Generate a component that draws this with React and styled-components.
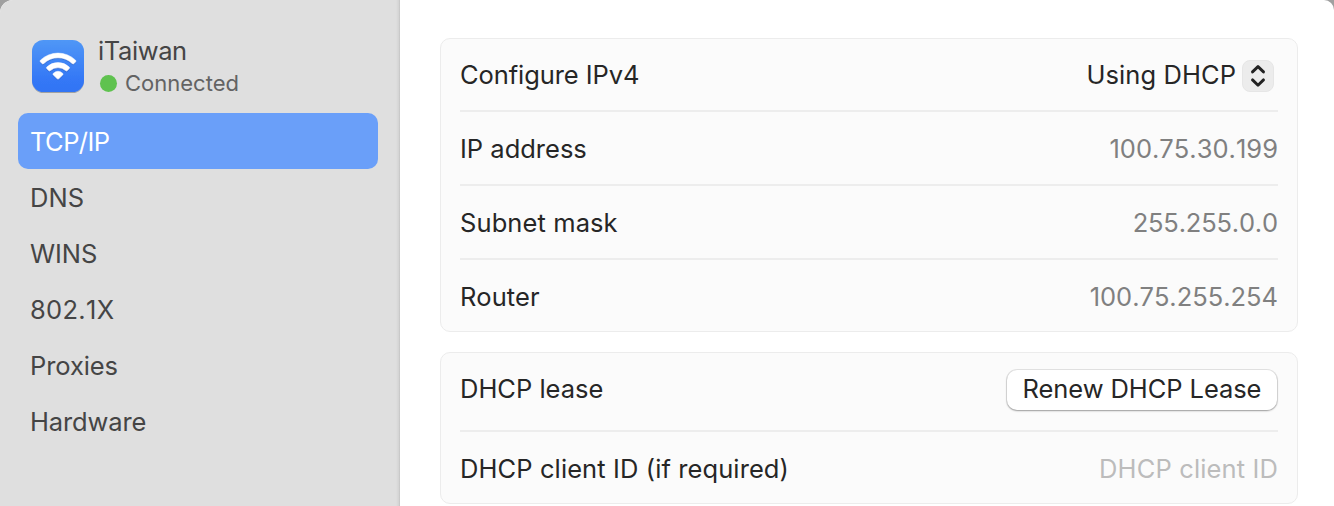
import React from "react";
import styled, { createGlobalStyle } from "styled-components";

const GlobalStyle = createGlobalStyle`
  *, *::before, *::after { box-sizing: border-box; }
  body {
    margin: 0;
    background: #a0a0a0;
    font-family: Inter, "Liberation Sans", sans-serif;
    font-size: 25.5px;
    color: #262626;
    overflow: hidden;
  }
`;

const Window = styled.div`
  display: flex;
  width: 1334px;
  height: 506px;
  overflow: hidden;
  border-radius: 13px 10px 0 0;
  background: #fff;
`;

const Sidebar = styled.aside`
  width: 400px;
  padding: 36px 22px 0 18px;
  background: linear-gradient(to right, #dfdfdf 396px, #d3d3d3 399px, #c0c0c0 400px);
`;

const Network = styled.div`
  display: flex;
  gap: 14px;
  height: 77px;
  padding: 4px 0 0 14px;
`;

const AppIcon = styled.svg`
  flex: none;
  width: 52px;
  height: 53px;
  overflow: visible;
`;

const NetworkText = styled.div`
  display: flex;
  flex-direction: column;
  margin-top: -4px;
  color: #454545;
`;

const Label = styled.span`
  line-height: 30px;
  white-space: nowrap;
  letter-spacing: ${(p) => p.$spacing || 0}px;
  margin-right: ${(p) => -(p.$spacing || 0)}px;
  font-kerning: ${(p) => (p.$unkerned ? "none" : "auto")};
`;

const Status = styled.div`
  display: flex;
  align-items: center;
  gap: 8px;
  height: 34px;
  padding-left: 2px;
  font-size: 22px;
  color: #636363;
`;

const Dot = styled.i`
  width: 17px;
  height: 17px;
  border-radius: 50%;
  background: #5fc24f;
`;

const NavItem = styled.div`
  display: flex;
  align-items: center;
  height: 56px;
  padding: 2px 12px 0;
  border-radius: 10px;
  color: ${(p) => (p.$active ? "#fff" : "#454545")};
  background: ${(p) => (p.$active ? "#6a9ff9" : "transparent")};
`;

const Content = styled.main`
  flex: 1;
  display: flex;
  flex-direction: column;
  gap: 20px;
  padding: 38px 36px 0 40px;
`;

const Card = styled.section`
  padding: 0 19px;
  border: 1px solid #ececec;
  border-radius: 10px;
  background: #fbfbfb;
`;

const Row = styled.div`
  display: flex;
  align-items: center;
  justify-content: space-between;
  height: ${(p) => p.$height}px;
  padding-top: ${(p) => p.$drop || 0}px;
  padding-bottom: ${(p) => p.$lift || 0}px;
  border-bottom: ${(p) => (p.$last ? "none" : "2px solid #ededed")};
`;

const Value = styled(Label)`
  color: ${(p) => (p.$placeholder ? "#bcbcbc" : "#808080")};
`;

const Select = styled.div`
  display: flex;
  align-items: center;
  gap: 6px;
  padding-right: 4px;
`;

const Stepper = styled.span`
  display: flex;
  width: 32px;
  height: 32px;
  margin-top: 2px;
  border: 1px solid #e6e6e6;
  border-radius: 8px;
  background: #ececec;
`;

const Button = styled.button`
  display: flex;
  align-items: center;
  justify-content: center;
  width: 270px;
  height: 40px;
  margin: 2px 1px 0 0;
  padding: 0 0 2px;
  border: 0;
  border-radius: 10px;
  background: #fff;
  color: inherit;
  font: inherit;
  box-shadow: 0 0 0 1px rgba(0, 0, 0, 0.09), 0 1px 2px rgba(0, 0, 0, 0.32);
`;

const items = [
  ["TCP/IP", -0.6],
  ["DNS", 0.1],
  ["WINS", -0.1],
  ["802.1X", 0.3],
  ["Proxies", -0.1],
  ["Hardware", -0.12],
];

const addresses = [
  ["IP address", "100.75.30.199", 0, 0.02],
  ["Subnet mask", "255.255.0.0", 0.1, -0.2],
  ["Router", "100.75.255.254", 0.15, -0.02],
];

function WifiIcon() {
  return (
    <AppIcon viewBox="0 0 52 53" aria-label="Wi-Fi">
      <defs>
        <linearGradient id="tile" x1="0" y1="0" x2="0" y2="1">
          <stop offset="0" stopColor="#5097f6" />
          <stop offset="0.75" stopColor="#3478f6" />
          <stop offset="1" stopColor="#3274f4" />
        </linearGradient>
        <filter id="tileShadow" x="-10%" y="-10%" width="120%" height="125%">
          <feDropShadow dx="0" dy="0.8" stdDeviation="0.7" floodOpacity="0.35" />
        </filter>
        <filter id="glyphShadow" x="-10%" y="-10%" width="120%" height="130%">
          <feDropShadow dx="0" dy="1" stdDeviation="0.7" floodColor="#123c90" floodOpacity="0.35" />
        </filter>
      </defs>
      <rect width="52" height="52" rx="11.5" fill="url(#tile)" filter="url(#tileShadow)" />
      <g filter="url(#glyphShadow)" fill="#fff" stroke="#fff" strokeWidth="0.5">
        <path d="M8.4 20.2A25.3 25.3 0 0 1 43.6 20.2Q44.3 21 43.6 21.8L42 23.5Q41.1 24.2 40.2 23.4A20.4 20.4 0 0 0 11.8 23.4Q10.9 24.2 10 23.5L8.4 21.8Q7.7 21 8.4 20.2Z" />
        <path d="M14.8 27A16.2 16.2 0 0 1 37.2 27Q37.9 27.8 37.2 28.6L35.3 30.5Q34.5 31.2 33.7 30.5A11.6 11.6 0 0 0 18.3 30.5Q17.5 31.2 16.7 30.5L14.8 28.6Q14.1 27.8 14.8 27Z" />
        <path d="M21.2 33.4Q26 29.1 30.8 33.4Q31.4 34.1 30.8 34.8L26.9 38.6Q26 39.4 25.1 38.6L21.2 34.8Q20.6 34.1 21.2 33.4Z" />
      </g>
    </AppIcon>
  );
}

export default function App() {
  return (
    <>
      <GlobalStyle />
      <Window>
        <Sidebar>
          <Network>
            <WifiIcon />
            <NetworkText>
              <Label $spacing={-0.4}>iTaiwan</Label>
              <Status>
                <Dot />
                <Label>Connected</Label>
              </Status>
            </NetworkText>
          </Network>
          {items.map(([name, spacing], i) => (
            <NavItem key={name} $active={i === 0}>
              <Label $spacing={spacing} $unkerned={name === "802.1X"}>{name}</Label>
            </NavItem>
          ))}
        </Sidebar>
        <Content>
          <Card>
            <Row $height={73}>
              <Label $spacing={-0.08}>Configure IPv4</Label>
              <Select>
                <Label $spacing={0.08}>Using DHCP</Label>
                <Stepper>
                  <svg width="30" height="30" viewBox="0 0 30 30" fill="none" stroke="#222" strokeWidth="2.9" strokeLinecap="round" strokeLinejoin="round">
                    <path d="M9.5 10.9L15 5.6L20.5 10.9M9.5 18.9L15 24.2L20.5 18.9" />
                  </svg>
                </Stepper>
              </Select>
            </Row>
            {addresses.map(([label, value, ls, vs], i) => (
              <Row key={label} $height={i === 2 ? 71 : 74} $drop={2} $last={i === 2}>
                <Label $spacing={ls}>{label}</Label>
                <Value $spacing={vs} $unkerned>{value}</Value>
              </Row>
            ))}
          </Card>
          <Card>
            <Row $height={79} $lift={6}>
              <Label>DHCP lease</Label>
              <Button><Label $spacing={-0.08}>Renew DHCP Lease</Label></Button>
            </Row>
            <Row $height={71} $drop={2} $last>
              <Label $spacing={0.1}>DHCP client ID (if required)</Label>
              <Value $placeholder $spacing={0.15}>DHCP client ID</Value>
            </Row>
          </Card>
        </Content>
      </Window>
    </>
  );
}
